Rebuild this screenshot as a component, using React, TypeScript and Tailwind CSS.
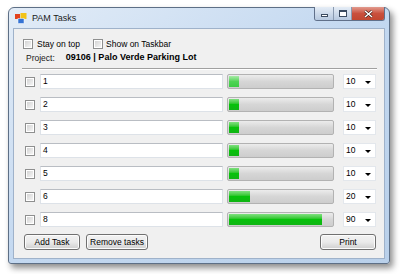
import React from "react";

const font = { fontFamily: '"Liberation Sans", Arial, sans-serif' };

function Check() {
  return (
    <div className="w-[10px] h-[10px] border border-[#8e8f8f] bg-white p-px shrink-0">
      <div className="w-full h-full bg-gradient-to-br from-[#d4d4d4] to-[#f4f4f4]" />
    </div>
  );
}

function Btn({ label, w }: { label: string; w: string }) {
  return (
    <div
      className={`${w} h-[16px] rounded-[3px] border border-[#707070] bg-gradient-to-b from-[#f2f2f2] via-[#ebebeb] to-[#cfcfcf] flex items-center justify-center text-[8.5px] text-black shadow-[inset_0_0_0_1px_#fcfcfc]`}
    >
      {label}
    </div>
  );
}

function Row({ label, pct, val, light }: { label: string; pct: number; val: string; light?: boolean }) {
  return (
    <div className="flex items-center h-[15px]">
      <div className="ml-[11px]">
        <Check />
      </div>
      <div className="ml-[5px] w-[183px] h-[15px] bg-white border border-[#dde2e8] border-t-[#b9bdc3] flex items-center pl-[2px] text-[8.5px] text-black">
        {label}
      </div>
      <div className="ml-[4px] w-[107px] h-[15px] rounded-[2px] border border-[#b2b2b2] bg-gradient-to-b from-[#ececec] via-[#d6d6d6] to-[#cdcdcd] p-px">
        <div
          className={
            light
              ? "h-full bg-gradient-to-b from-[#a6eaa6] via-[#4fd455] to-[#3ccc44]"
              : "h-full bg-gradient-to-b from-[#7ee07e] via-[#06c20a] to-[#10b414]"
          }
          style={{ width: `${pct}%` }}
        />
      </div>
      <div className="ml-[9px] w-[33px] h-[15px] bg-white border border-[#e3e7ec] flex items-center pl-[2px] text-[8.5px] text-black relative">
        {val}
        <svg className="absolute right-[4px] top-[6px]" width="6" height="3" viewBox="0 0 6 3">
          <path d="M0 0h6L3 3z" fill="#000" />
        </svg>
      </div>
    </div>
  );
}

export default function App() {
  const rows = [
    { l: "1", p: 10, v: "10", light: true },
    { l: "2", p: 10, v: "10" },
    { l: "3", p: 10, v: "10" },
    { l: "4", p: 10, v: "10" },
    { l: "5", p: 10, v: "10" },
    { l: "6", p: 20, v: "20" },
    { l: "8", p: 90, v: "90" },
  ];
  return (
    <div className="w-[400px] h-[274px] bg-white overflow-hidden pt-[7px] pl-[8px]" style={font}>
      <div className="w-[382px] h-[257px] rounded-t-[6px] rounded-b-[3px] border border-[#5d6f86] bg-gradient-to-br from-[#e2ecf7] via-[#c3d8f0] to-[#b9d0ea] shadow-[3px_4px_6px_rgba(0,0,0,0.45)] flex flex-col px-[4px] pb-[4px]">
        <div className="h-[20px] flex items-start relative shrink-0">
          <svg className="mt-[5px] ml-[2px]" width="12" height="11" viewBox="0 0 12 11">
            <rect x="0" y="1" width="5" height="5" fill="#e2421e" />
            <rect x="5.5" y="0" width="6" height="6" fill="#f2c318" />
            <rect x="3" y="5.5" width="6" height="5" fill="#3573d4" />
            <rect x="3" y="5.5" width="6" height="5" fill="none" stroke="#ffffff" strokeWidth="0.5" />
          </svg>
          <div className="ml-[5px] mt-[5px] text-[9px] text-[#1a1a1a] leading-[10px]">PAM Tasks</div>
          <div className="absolute right-[0px] top-[-1px] flex h-[14px] border border-[#60708a] border-t-0 rounded-b-[3px] overflow-hidden">
            <div className="w-[19px] h-full bg-gradient-to-b from-[#e5edf6] to-[#b6c8df] border-r border-[#8a9ab0] flex items-center justify-center">
              <div className="w-[7px] h-[3px] border border-[#3b4b60] bg-white mt-[3px]" />
            </div>
            <div className="w-[18px] h-full bg-gradient-to-b from-[#e5edf6] to-[#b6c8df] border-r border-[#8a9ab0] flex items-center justify-center">
              <div className="w-[8px] h-[7px] border border-[#3b4b60] bg-white border-t-2" />
            </div>
            <div className="w-[32px] h-full bg-gradient-to-b from-[#e19a8e] via-[#c9503d] to-[#c2462f] flex items-center justify-center">
              <svg width="9" height="8" viewBox="0 0 9 8">
                <path d="M1 1L8 7M8 1L1 7" stroke="#3b1c16" strokeWidth="2.6" />
                <path d="M1 1L8 7M8 1L1 7" stroke="#ffffff" strokeWidth="1.5" />
              </svg>
            </div>
          </div>
        </div>
        <div className="flex-1 border border-[#9fb2ca] bg-[#f0f0f0] flex flex-col pt-[10px] text-[8.5px] text-black">
          <div className="h-[10px] flex items-center">
            <div className="ml-[9px]">
              <Check />
            </div>
            <span className="ml-[4px]">Stay on top</span>
            <div className="ml-[13px]">
              <Check />
            </div>
            <span className="ml-[3px]">Show on Taskbar</span>
          </div>
          <div className="h-[12px] mt-[3px] flex items-center">
            <span className="ml-[12px] text-[#202020]">Project:</span>
            <span className="ml-[11px] font-bold text-[9px]">09106 | Palo Verde Parking Lot</span>
          </div>
          <div className="mt-[4px] ml-[8px] mr-[7px] h-[2px] border-t border-[#a0a0a0] border-b border-b-white" />
          <div className="mt-[4px] flex flex-col gap-[8px]">
            {rows.map((r, i) => (
              <Row key={i} label={r.l} pct={r.p} val={r.v} light={r.light} />
            ))}
          </div>
          <div className="mt-[7px] flex items-center">
            <div className="ml-[10px]">
              <Btn label="Add Task" w="w-[56px]" />
            </div>
            <div className="ml-[6px]">
              <Btn label="Remove tasks" w="w-[62px]" />
            </div>
            <div className="ml-auto mr-[8px]">
              <Btn label="Print" w="w-[56px]" />
            </div>
          </div>
        </div>
      </div>
    </div>
  );
}
